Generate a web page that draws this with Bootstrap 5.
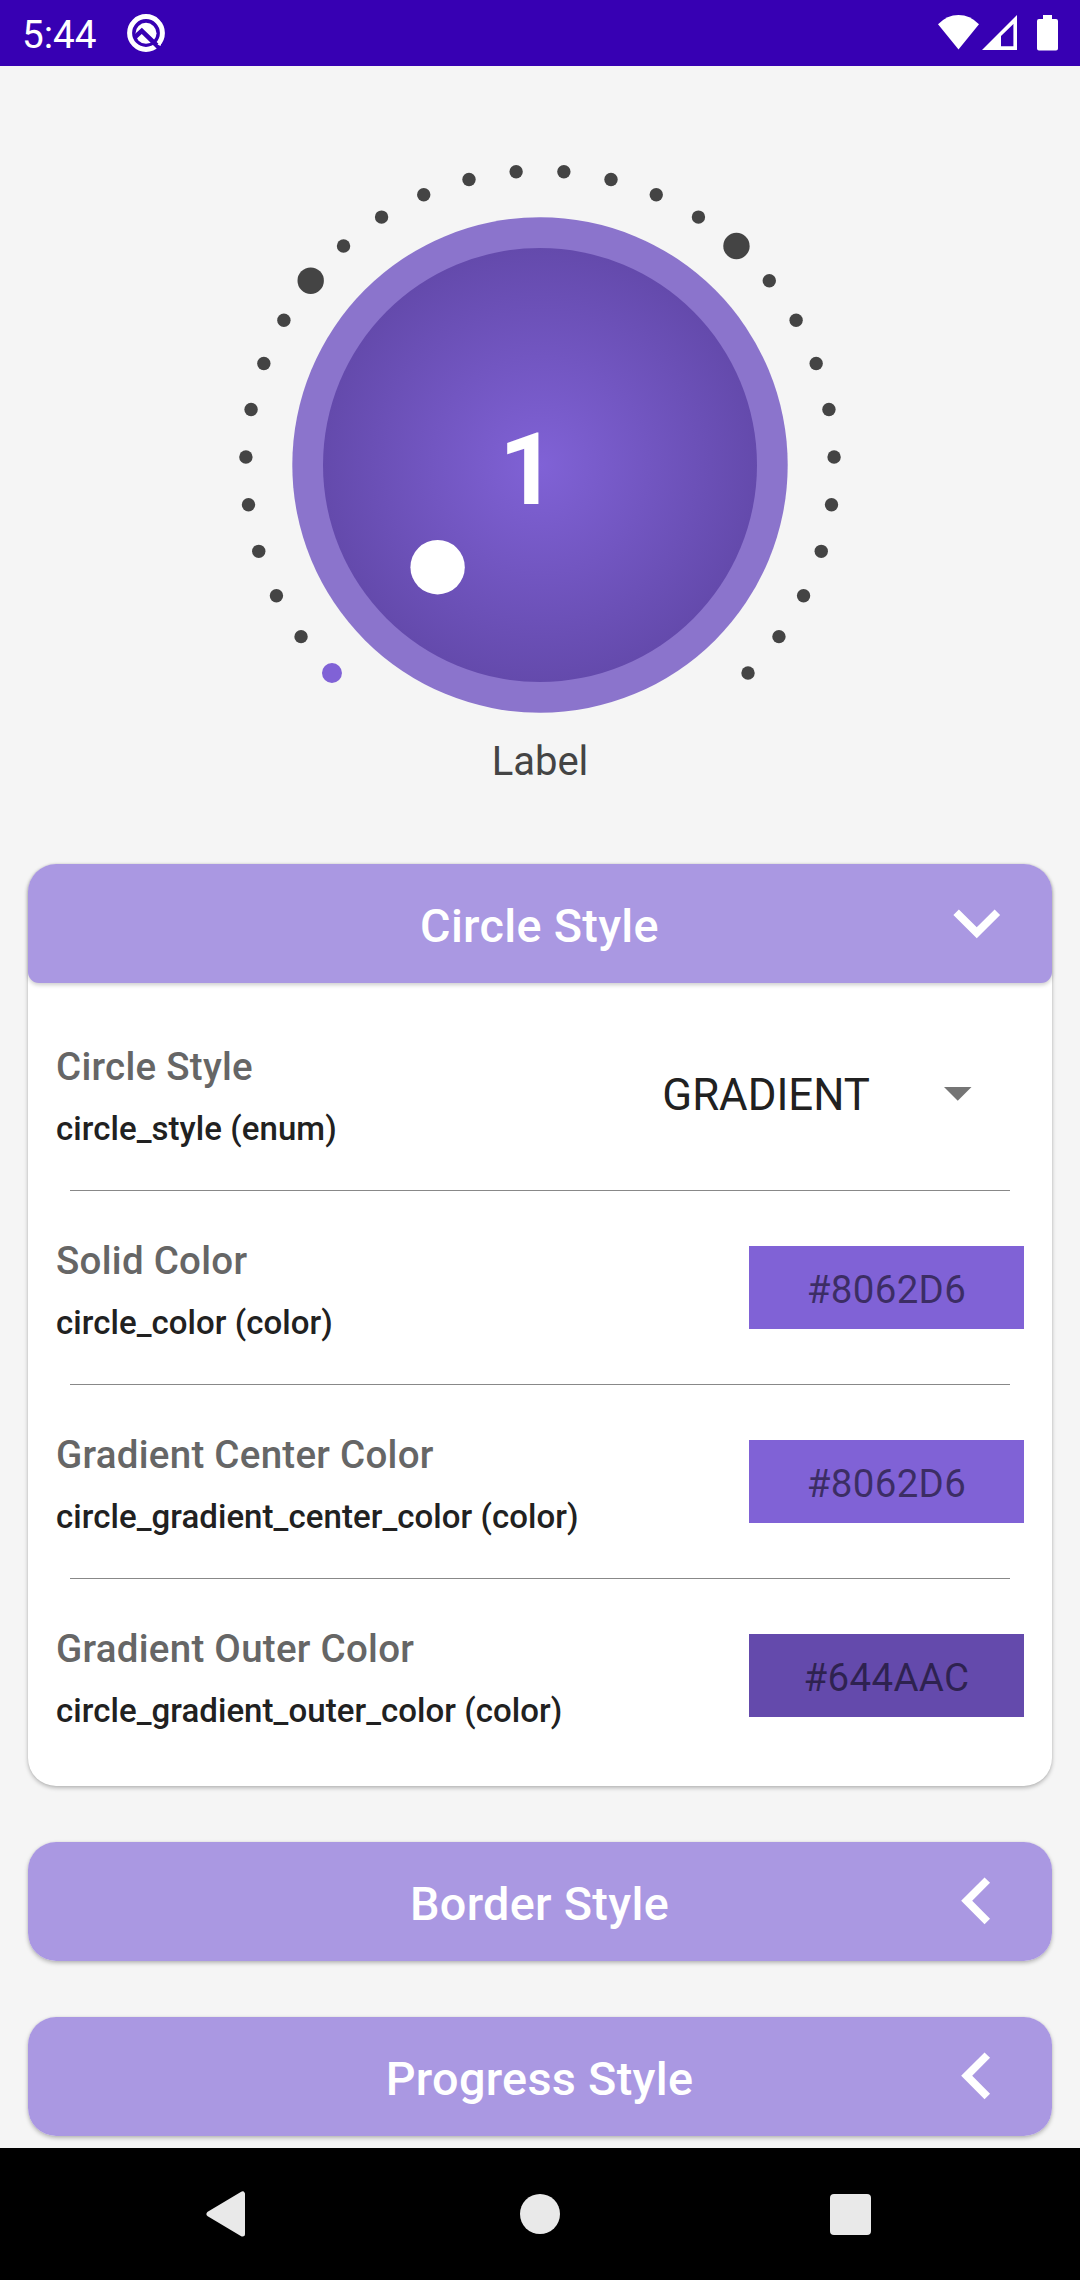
<!doctype html>
<html lang="en">
<head>
<meta charset="utf-8">
<meta name="viewport" content="width=device-width, initial-scale=1">
<title>Knob</title>
<link href="https://cdn.jsdelivr.net/npm/bootstrap@5.3.0/dist/css/bootstrap.min.css" rel="stylesheet">
<style>
  body { background: #f5f5f5; font-family: Roboto, "Noto Sans", sans-serif; color: #212121; }
  .screen { width: 1080px; height: 2280px; }
  .status-bar { height: 66px; background: #3700b3; padding: 0 22px 0 22px; }
  .clock { font-size: 38.7px; line-height: 66px; padding-top: 2px; width: 96px; }
  .dial { height: 665px; }
  .dial-value { font-size: 100.5px; font-weight: 700; }
  .dial-label { font-size: 40px; line-height: 60px; color: #444; padding-top: 1px; margin-bottom: 72px; }
  .panels { padding: 0 28px; gap: 56px; }
  .panel { background: #fff; border-radius: 28px; box-shadow: 0 2px 4px rgba(0,0,0,.26), 0 0 2px rgba(0,0,0,.08); }
  .panel-head { height: 119px; background: #aa98e2; border-radius: 28px; padding: 0 29px 0 27px; }
  .panel-head.open { border-radius: 28px 28px 11px 11px; box-shadow: 0 2px 4px rgba(0,0,0,.2); }
  .panel-title { font-size: 46.75px; font-weight: 500; letter-spacing: .3px; line-height: 114px; padding: 5px 0 0 1px; }
  .head-icon { width: 93.5px; height: 93.5px; margin-bottom: 1px; }
  .panel-rows { padding: 14px 28px; }
  .setting { height: 193px; }
  .rule { height: 1px; background: #888; margin: 0 14px; }
  .setting-text { padding-top: 40px; }
  .setting-name { font-size: 38.5px; font-weight: 500; letter-spacing: .275px; line-height: 60px; color: #666; }
  .setting-key { font-size: 33px; font-weight: 500; letter-spacing: .06px; line-height: 64px; }
  .spinner-value { font-size: 43.8px; line-height: 60px; padding-top: 3px; }
  .swatch { width: 275px; height: 83px; font-size: 38.5px; letter-spacing: .3px; line-height: 78px; padding-top: 5px; color: rgba(0,0,0,.54); }
  .swatch-main { background: #8062d6; }
  .swatch-outer { background: #644aac; }
  .nav-keys { height: 132px; background: #000; padding-left: 206px; gap: 270px; }
</style>
</head>
<body>
<div class="screen d-flex flex-column overflow-hidden">
  <header class="status-bar d-flex justify-content-between flex-shrink-0 text-white">
    <div class="d-flex">
      <span class="clock">5:44</span>
      <svg width="56" height="66" viewBox="118 0 56 66">
        <circle cx="146" cy="33" r="16.4" fill="none" stroke="#fff" stroke-width="5"/>
        <circle cx="146" cy="33.3" r="10.5" fill="#fff"/>
        <path d="M134.5 37.5L141.8 30.8L160.5 49" fill="none" stroke="#3700b3" stroke-width="4.6"/>
        <path d="M157.5 44.500L162 40.500L160.500 46Z" fill="#fff"/>
      </svg>
    </div>
    <svg width="122" height="66" viewBox="936 0 122 66" fill="#fff">
      <path d="M938 24.3Q947 15 958.500 15T979 24.300L958.500 49.500Z"/>
      <path fill-rule="evenodd" d="M982 50L1017 15V50ZM1001 36V46.200H1013.400V24Z"/>
      <path d="M1043 15h9v4h4a2 2 0 0 1 2 2v27.500a2 2 0 0 1-2 2h-17a2 2 0 0 1-2-2V21a2 2 0 0 1 2-2h4z"/>
    </svg>
  </header>

  <main class="flex-grow-1 overflow-hidden d-flex flex-column">
    <svg class="dial flex-shrink-0" width="1080" height="665" viewBox="0 66 1080 665">
      <defs>
        <radialGradient id="knob" gradientUnits="userSpaceOnUse" cx="540" cy="465" r="217">
          <stop offset="0" stop-color="#8062d6"/><stop offset="1" stop-color="#644aac"/>
        </radialGradient>
      </defs>
      <g id="ticks"></g>
      <circle cx="540" cy="465" r="247.700" fill="#8b74cc"/>
      <circle cx="540" cy="465" r="217" fill="url(#knob)"/>
      <circle cx="437.600" cy="567.200" r="27.200" fill="#fff"/>
      <text class="dial-value" x="499" y="504" fill="#fff">1</text>
    </svg>
    <div class="dial-label text-center flex-shrink-0">Label</div>

    <div class="panels d-flex flex-column">
      <section class="panel">
        <div class="panel-head open d-flex align-items-center text-white">
          <span class="head-icon"></span>
          <span class="panel-title flex-grow-1 text-center">Circle Style</span>
          <svg class="head-icon" viewBox="0 0 24 24" fill="#fff"><path d="M7.410 8.590L12 13.170l4.590-4.580L18 10l-6 6-6-6z"/></svg>
        </div>
        <div class="panel-rows">
          <div class="setting d-flex justify-content-between">
            <div class="setting-text">
              <div class="setting-name">Circle Style</div>
              <div class="setting-key">circle_style (enum)</div>
            </div>
            <div class="d-flex align-items-center pe-5">
              <span class="spinner-value">GRADIENT</span>
              <svg width="106" height="14" viewBox="870.500 1087.300 106 14"><path d="M944.500 1087.300h27.500l-13.750 13.750z" fill="#757575"/></svg>
            </div>
          </div>
          <div class="rule"></div>
          <div class="setting d-flex justify-content-between">
            <div class="setting-text">
              <div class="setting-name">Solid Color</div>
              <div class="setting-key">circle_color (color)</div>
            </div>
            <div class="swatch swatch-main text-center align-self-center">#8062D6</div>
          </div>
          <div class="rule"></div>
          <div class="setting d-flex justify-content-between">
            <div class="setting-text">
              <div class="setting-name">Gradient Center Color</div>
              <div class="setting-key">circle_gradient_center_color (color)</div>
            </div>
            <div class="swatch swatch-main text-center align-self-center">#8062D6</div>
          </div>
          <div class="rule"></div>
          <div class="setting d-flex justify-content-between">
            <div class="setting-text">
              <div class="setting-name">Gradient Outer Color</div>
              <div class="setting-key">circle_gradient_outer_color (color)</div>
            </div>
            <div class="swatch swatch-outer text-center align-self-center">#644AAC</div>
          </div>
        </div>
      </section>

      <section class="panel">
        <div class="panel-head d-flex align-items-center text-white">
          <span class="head-icon"></span>
          <span class="panel-title flex-grow-1 text-center">Border Style</span>
          <svg class="head-icon" viewBox="0 0 24 24" fill="#fff"><path d="M15.410 16.590L10.830 12l4.580-4.590L14 6l-6 6 6 6z"/></svg>
        </div>
      </section>

      <section class="panel">
        <div class="panel-head d-flex align-items-center text-white">
          <span class="head-icon"></span>
          <span class="panel-title flex-grow-1 text-center">Progress Style</span>
          <svg class="head-icon" viewBox="0 0 24 24" fill="#fff"><path d="M15.410 16.590L10.830 12l4.580-4.590L14 6l-6 6 6 6z"/></svg>
        </div>
      </section>
    </div>
  </main>

  <footer class="nav-keys d-flex align-items-center flex-shrink-0">
    <svg width="44" height="46" viewBox="0 0 44 46"><path d="M3 23L36.500 3V43Z" fill="#e9e9e9" stroke="#e9e9e9" stroke-width="5" stroke-linejoin="round"/></svg>
    <svg width="40" height="40" viewBox="0 0 40 40"><circle cx="20" cy="20" r="20" fill="#e9e9e9"/></svg>
    <svg width="41" height="41" viewBox="0 0 41 41"><rect width="41" height="41" rx="4" fill="#e9e9e9"/></svg>
  </footer>
</div>
<script>
  // Thirty ticks over a 270 degree sweep; the first one is the current progress.
  const ticks = document.getElementById('ticks');
  for (let i = 0; i < 30; i++) {
    const a = (-135 + i * 270 / 29) * Math.PI / 180;
    const dot = document.createElementNS('http://www.w3.org/2000/svg', 'circle');
    dot.setAttribute('cx', 540 + 294.200 * Math.sin(a));
    dot.setAttribute('cy', 465 - 294.200 * Math.cos(a));
    dot.setAttribute('r', i === 0 ? 10 : (i === 9 || i === 19) ? 13.200 : 6.700);
    dot.setAttribute('fill', i === 0 ? '#8062d6' : '#444');
    ticks.appendChild(dot);
  }
</script>
<script src="https://cdn.jsdelivr.net/npm/bootstrap@5.3.0/dist/js/bootstrap.bundle.min.js"></script>
</body>
</html>
